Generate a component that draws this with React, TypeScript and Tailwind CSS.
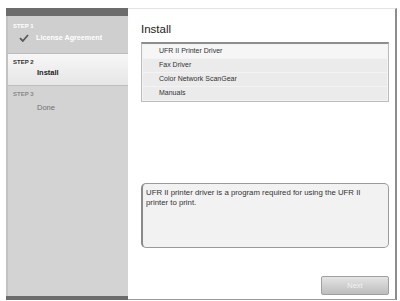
const items = ["UFR II Printer Driver", "Fax Driver", "Color Network ScanGear", "Manuals"]

function Check() {
    return (
        <svg width="10" height="8" viewBox="0 0 10 8" className="shrink-0">
            <path d="M1 4.2 L3.8 7 L9 1" fill="none" stroke="#5a5a5a" strokeWidth="1.8" />
        </svg>
    )
}

export default function App() {
    return (
        <div
            className="w-[400px] h-[301px] bg-white flex pt-[8px] pl-[6px] pr-[3px] pb-[1px]"
            style={{ fontFamily: '"Liberation Sans", Arial, sans-serif' }}
        >
            {/* Sidebar */}
            <div className="w-[122px] flex flex-col bg-[#d3d3d3] border-l-2 border-[#c2c2c2]">
                <div className="h-[8px] bg-[#6c6c6c] -ml-[2px]" />
                {/* Step 1 */}
                <div className="h-[38px] bg-[#cfcfcf] border-b border-[#bdbdbd] pl-[5px] pt-[6px]">
                    <div className="text-[6px] font-bold text-white leading-[8px]">STEP 1</div>
                    <div className="flex items-center gap-[7px] pl-[6px] mt-[3px]">
                        <Check />
                        <span className="text-[7.2px] font-bold text-white leading-[10px]">License Agreement</span>
                    </div>
                </div>
                {/* Step 2 */}
                <div className="h-[32px] bg-gradient-to-b from-[#f7f7f7] to-[#e6e6e6] border-b border-[#bdbdbd] pl-[5px] pt-[4px]">
                    <div className="text-[6px] font-bold text-[#333] leading-[8px]">STEP 2</div>
                    <div className="text-[7.5px] font-bold text-[#222] leading-[10px] pl-[24px] mt-[2px]">Install</div>
                </div>
                {/* Step 3 */}
                <div className="flex-1 pl-[5px] pt-[4px]">
                    <div className="text-[6px] font-bold text-[#8a8a8a] leading-[8px]">STEP 3</div>
                    <div className="text-[7.5px] text-[#707070] leading-[10px] pl-[24px] mt-[5px]">Done</div>
                </div>
                <div className="h-[4px] bg-[#6c6c6c] -ml-[2px]" />
            </div>

            {/* Content */}
            <div className="flex-1 flex flex-col border-t border-[#e4e4e4] border-r-2 border-r-[#8c8c8c] border-b border-b-[#9a9a9a] pl-[13px] pr-[6px] pt-[13px] pb-[4px]">
                <div className="text-[11.5px] text-[#222] leading-[14px]">Install</div>
                <div className="mt-[6px] border border-[#bcbcbc] border-t-2 border-t-[#8e8e8e] bg-[#f3f3f3] flex flex-col gap-[1px] p-[1px]">
                    {items.map((it, i) => (
                        <div
                            key={it}
                            className={`h-[13px] flex items-center pl-[16px] text-[7px] text-[#333] ${i === 0 ? "bg-[#f6f6f6]" : "bg-[#ebebeb]"}`}
                        >
                            {it}
                        </div>
                    ))}
                </div>
                <div className="flex-1" />
                <div className="h-[65px] rounded-[5px] border border-[#9a9a9a] border-l-2 border-l-[#8a8a8a] bg-[#f2f2f2] pl-[3px] pr-[14px] pt-[4px] text-[7.8px] leading-[10px] text-[#333]">
                    UFR II printer driver is a program required for using the UFR II printer to print.
                </div>
                <div className="flex justify-end mt-[28px]">
                    <button className="w-[68px] h-[19px] rounded-[2px] border border-[#9f9f9f] bg-gradient-to-b from-[#e4e4e4] to-[#bdbdbd] text-[7.5px] text-[#f2f2f2]">
                        Next
                    </button>
                </div>
            </div>
        </div>
    )
}
